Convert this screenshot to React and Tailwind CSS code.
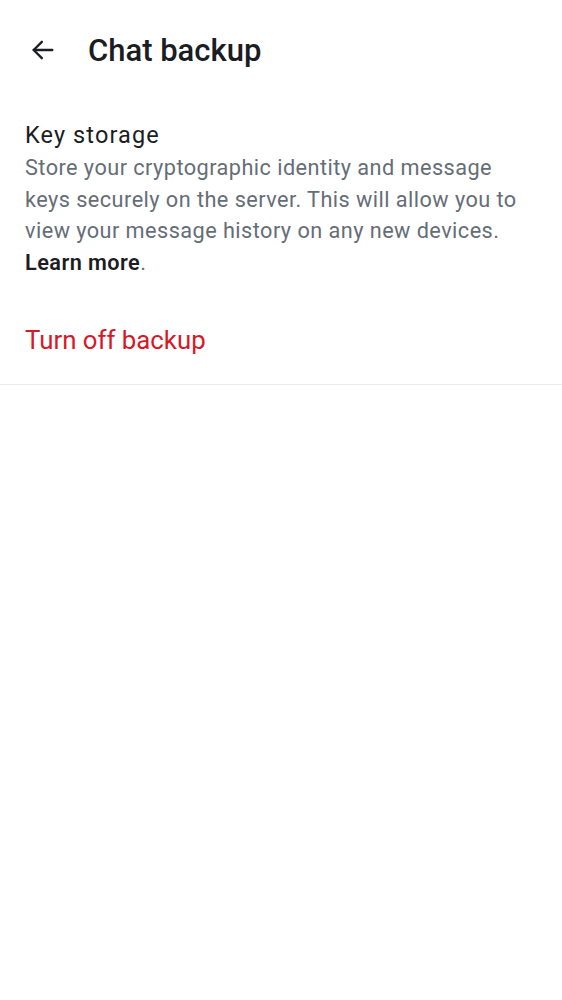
import React from "react";

const BackIcon = () => (
  <svg width="28" height="28" viewBox="0 0 24 24" fill="none" stroke="#1b1d22" strokeWidth="2" strokeLinecap="round" strokeLinejoin="round">
    <path d="M20 12H4" />
    <path d="M11 5l-7 7 7 7" />
  </svg>
);

export default function App() {
  return (
    <div className="min-h-screen bg-white text-[#1b1d22]" style={{ fontFamily: "Roboto, 'Noto Sans', sans-serif" }}>
      {/* top bar */}
      <div className="flex items-center h-[100px] pl-[29px]">
        <BackIcon />
        <h1 className="ml-[31px] text-[31px] font-medium leading-none">Chat backup</h1>
      </div>

      {/* key storage */}
      <div className="px-[25px] pt-[18px]">
        <div className="text-[23.5px] tracking-[1.1px] leading-[34px]">Key storage</div>
        <p className="text-[21.7px] tracking-[0.45px] leading-[31.5px] text-[#656d77]">
          Store your cryptographic identity and message keys securely on the server. This will allow you to view your message history on any new devices.{" "}
          <span className="font-semibold text-[#1b1d22]">Learn more</span>.
        </p>
      </div>

      <div className="px-[25px] pt-[46px] pb-[28px] border-b border-[#e9ebef]">
        <button className="text-[25.8px] leading-[32px] text-[#d51928]">Turn off backup</button>
      </div>
    </div>
  );
}
